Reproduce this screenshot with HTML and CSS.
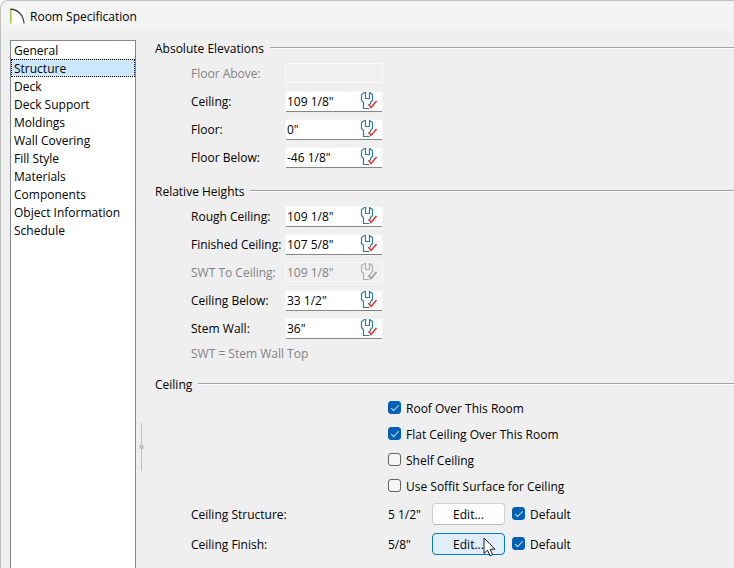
FILE: index.html
```html
<!DOCTYPE html>
<html lang="en">
<head>
    <meta charset="UTF-8">
    <meta name="viewport" content="width=device-width, initial-scale=1.0">
    <title>Room Specification</title>
    <link rel="stylesheet" href="styles.css">
</head>
<body>
    <svg class="sprite" aria-hidden="true">
        <symbol id="wrench" viewBox="0 0 18 18">
            <path class="wrench-body" d="M5.5 0.5 H4.5 L1.5 2.5 V8.5 L3.5 10.5 V16.5 H9.5 M5.5 0 V6.5 H9.5 V0.5 L12.5 2.5 V8.5 L10.5 10.5 V12.5" />
            <path class="wrench-tick" d="M8.5 12 L11 15.5 L16.5 9" />
        </symbol>
    </svg>

    <div class="dialog">
        <header class="titlebar">
            <svg class="logo" width="15" height="16" viewBox="0 0 15 16">
                <rect width="15" height="16" fill="#fff" />
                <path d="M0.75 1 V15.5" stroke="#9bc53d" stroke-width="1.5" fill="none" />
                <path d="M0.5 1 C8 1.5 13.5 7 14 15.5" stroke="#404040" stroke-width="1.3" fill="none" />
            </svg>
            <h1>Room Specification</h1>
        </header>

        <div class="dialog-body">
            <nav class="pages">
                <a href="#">General</a>
                <a href="#" class="selected">Structure</a>
                <a href="#">Deck</a>
                <a href="#">Deck Support</a>
                <a href="#">Moldings</a>
                <a href="#">Wall Covering</a>
                <a href="#">Fill Style</a>
                <a href="#">Materials</a>
                <a href="#">Components</a>
                <a href="#">Object Information</a>
                <a href="#">Schedule</a>
            </nav>

            <div class="splitter">
                <svg width="5" height="48" viewBox="0 0 5 48">
                    <path d="M2.5 0 V48" stroke="#c0c0c0" />
                    <circle cx="2.5" cy="24" r="2.4" fill="#c0c0c0" />
                </svg>
            </div>

            <main class="panel">
                <section class="group">
                    <h2>Absolute Elevations</h2>
                    <div class="row disabled">
                        <label for="floor-above">Floor Above:</label>
                        <div class="field"><input type="text" id="floor-above" disabled></div>
                    </div>
                    <div class="row">
                        <label for="ceiling">Ceiling:</label>
                        <div class="field">
                            <input type="text" id="ceiling" value='109 1/8"'>
                            <button type="button" class="tool" aria-label="Default"><svg><use href="#wrench" /></svg></button>
                        </div>
                    </div>
                    <div class="row">
                        <label for="floor">Floor:</label>
                        <div class="field">
                            <input type="text" id="floor" value='0"'>
                            <button type="button" class="tool" aria-label="Default"><svg><use href="#wrench" /></svg></button>
                        </div>
                    </div>
                    <div class="row">
                        <label for="floor-below">Floor Below:</label>
                        <div class="field">
                            <input type="text" id="floor-below" value='-46 1/8"'>
                            <button type="button" class="tool" aria-label="Default"><svg><use href="#wrench" /></svg></button>
                        </div>
                    </div>
                </section>

                <section class="group">
                    <h2>Relative Heights</h2>
                    <div class="row">
                        <label for="rough-ceiling">Rough Ceiling:</label>
                        <div class="field">
                            <input type="text" id="rough-ceiling" value='109 1/8"'>
                            <button type="button" class="tool" aria-label="Default"><svg><use href="#wrench" /></svg></button>
                        </div>
                    </div>
                    <div class="row">
                        <label for="finished-ceiling">Finished Ceiling:</label>
                        <div class="field">
                            <input type="text" id="finished-ceiling" value='107 5/8"'>
                            <button type="button" class="tool" aria-label="Default"><svg><use href="#wrench" /></svg></button>
                        </div>
                    </div>
                    <div class="row disabled">
                        <label for="swt-ceiling">SWT To Ceiling:</label>
                        <div class="field">
                            <input type="text" id="swt-ceiling" value='109 1/8"' disabled>
                            <button type="button" class="tool" aria-label="Default" disabled><svg><use href="#wrench" /></svg></button>
                        </div>
                    </div>
                    <div class="row">
                        <label for="ceiling-below">Ceiling Below:</label>
                        <div class="field">
                            <input type="text" id="ceiling-below" value='33 1/2"'>
                            <button type="button" class="tool" aria-label="Default"><svg><use href="#wrench" /></svg></button>
                        </div>
                    </div>
                    <div class="row">
                        <label for="stem-wall">Stem Wall:</label>
                        <div class="field">
                            <input type="text" id="stem-wall" value='36"'>
                            <button type="button" class="tool" aria-label="Default"><svg><use href="#wrench" /></svg></button>
                        </div>
                    </div>
                    <p class="note">SWT = Stem Wall Top</p>
                </section>

                <section class="group">
                    <h2>Ceiling</h2>
                    <div class="checks">
                        <label class="check"><input type="checkbox" checked>Roof Over This Room</label>
                        <label class="check"><input type="checkbox" checked>Flat Ceiling Over This Room</label>
                        <label class="check"><input type="checkbox">Shelf Ceiling</label>
                        <label class="check"><input type="checkbox">Use Soffit Surface for Ceiling</label>
                    </div>
                    <div class="material">
                        <span>Ceiling Structure:</span>
                        <span>5 1/2"</span>
                        <button type="button" class="edit">Edit...</button>
                        <label class="check"><input type="checkbox" checked>Default</label>
                    </div>
                    <div class="material">
                        <span>Ceiling Finish:</span>
                        <span>5/8"</span>
                        <button type="button" class="edit hot">Edit...
                            <svg class="pointer" width="13" height="20" viewBox="0 0 13 20">
                                <path d="M1 1 V16.5 L4.5 13.2 L7 18.8 L9.6 17.7 L7.2 12.2 H12 Z" fill="#fff" stroke="#1a1a2e" />
                            </svg>
                        </button>
                        <label class="check"><input type="checkbox" checked>Default</label>
                    </div>
                </section>
            </main>
        </div>
    </div>
</body>
</html>
```

FILE: styles.css
```css
* {
    box-sizing: border-box;
}

body {
    margin: 0;
    background: #fff;
    color: #000;
    font-family: "Open Sans", "Noto Sans", sans-serif;
    font-size: 12px;
    line-height: 18px;
}

input,
button {
    font: inherit;
    color: inherit;
}

.sprite {
    display: none;
}

.dialog {
    display: flex;
    flex-direction: column;
    min-height: 100vh;
    background: #efefef;
    border-top: 1px solid #c0c0c0;
    border-left: 1px solid #c0c0c0;
    border-top-left-radius: 8px;
    overflow: hidden;
}

.titlebar {
    display: flex;
    align-items: center;
    gap: 5px;
    height: 30px;
    padding-left: 9px;
    background: #f3f3f3;
}

.titlebar h1 {
    margin: 0;
    padding-top: 2px;
    font-size: 12px;
    font-weight: normal;
}

.dialog-body {
    display: flex;
    flex: 1;
    padding-top: 9px;
    padding-left: 9px;
}

/* page list */
.pages {
    width: 126px;
    background: #fff;
    border: 1px solid #828790;
    border-bottom: none;
}

.pages a {
    display: block;
    height: 18px;
    padding-left: 3px;
    color: #000;
    line-height: 20px;
    text-decoration: none;
    white-space: nowrap;
}

.pages .selected {
    background: #cce8ff;
    outline: 1px dotted #000;
    outline-offset: -1px;
}

.splitter {
    width: 19px;
    padding-top: 383px;
    padding-left: 3px;
}

.splitter svg {
    display: block;
}

/* settings */
.panel {
    flex: 1;
    min-width: 0;
}

.group {
    margin-bottom: 12px;
}

.group h2 {
    display: flex;
    gap: 6px;
    height: 16px;
    margin: 0 0 3px;
    font-size: 12px;
    font-weight: normal;
}

.group h2::after {
    content: "";
    flex: 1;
    align-self: center;
    height: 1px;
    background: #a0a0a0;
    border-bottom: 1px solid #fff;
}

.row {
    display: grid;
    grid-template-columns: 94px 98px;
    align-items: center;
    height: 28px;
    padding-left: 36px;
    white-space: nowrap;
}

.row label,
.material span {
    padding-top: 2px;
}

.disabled,
.note {
    color: #838383;
}

.field {
    display: flex;
    align-items: center;
    height: 21px;
    background: #fff;
    border: 1px solid #f5f5f5;
    border-bottom-color: #868686;
    border-radius: 2px;
}

.disabled .field {
    height: 20px;
    background: #f0f0f0;
    border-color: #fafafa;
}

.field input {
    flex: 1;
    min-width: 0;
    height: 18px;
    padding: 2px 0 0 1px;
    border: none;
    outline: none;
    background: none;
}

.tool {
    width: 18px;
    height: 18px;
    margin-right: 4px;
    padding: 0;
    border: none;
    background: none;
    color: #2e7d9e;
}

.tool svg {
    display: block;
    width: 18px;
    height: 18px;
}

.wrench-body,
.wrench-tick {
    fill: none;
    stroke: currentColor;
    stroke-width: 1.2;
}

.wrench-tick {
    stroke: var(--tick, #e03c31);
    stroke-width: 1.6;
}

.disabled .tool {
    --tick: #9a9a9a;
    color: #b0b0b0;
}

.note {
    margin: 0;
    padding-top: 2px;
    padding-left: 36px;
    line-height: 20px;
}

.checks {
    padding-left: 233px;
}

.check {
    display: flex;
    align-items: center;
    gap: 5px;
    height: 26px;
    padding-top: 2px;
    white-space: nowrap;
}

.check input {
    display: grid;
    place-items: center;
    width: 13px;
    height: 13px;
    margin: 0 0 3px;
    appearance: none;
    background: #f5f5f5;
    border: 1px solid #626262;
    border-radius: 3px;
}

.check input:checked {
    background: #005fb8;
    border-color: #005fb8;
}

.check input:checked::before {
    content: "";
    width: 7px;
    height: 3px;
    border: solid #d6e6f5;
    border-width: 0 0 1px 1px;
    transform: translateY(-1px) rotate(-45deg);
}

.material {
    display: grid;
    grid-template-columns: 197px 44px 73px auto;
    align-items: center;
    justify-content: start;
    height: 30px;
    padding-left: 36px;
    white-space: nowrap;
}

.material .check {
    padding-left: 7px;
}

.edit {
    position: relative;
    height: 22px;
    padding: 2px 0 0;
    background: #fdfdfd;
    border: 1px solid #d0d0d0;
    border-bottom-color: #bababa;
    border-radius: 4px;
    line-height: 18px;
}

.edit.hot {
    background: #e0eef9;
    border-color: #0078d4;
}

/* mouse pointer resting on the button */
.pointer {
    position: absolute;
    top: 3px;
    left: 50px;
}
```
